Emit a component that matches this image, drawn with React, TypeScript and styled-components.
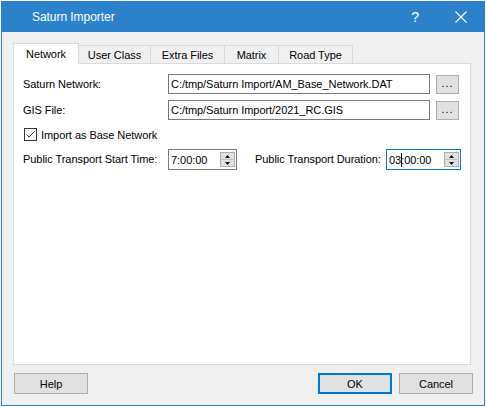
import { FC } from "react";
import styled, { createGlobalStyle } from "styled-components";

const GlobalStyle = createGlobalStyle`
	html, body {
		margin: 0;
		padding: 0;
		background: #ffffff;
	}
	body {
		font-family: "Liberation Sans", Arial, sans-serif;
		font-size: 11px;
		letter-spacing: -0.05px;
		color: #000000;
	}
`;

const StyledWindow = styled.div`
	box-sizing: border-box;
	margin: 1px 0 0 1px;
	width: 484px;
	height: 405px;
	border: 1px solid #2b82cb;
	display: flex;
	flex-direction: column;
	background: #f0f0f0;
`;

const StyledTitleBar = styled.div`
	height: 30px;
	flex: none;
	display: flex;
	align-items: center;
	background: #2b82cb;
	color: #ffffff;
	font-size: 12px;
	padding-left: 30px;
`;

const StyledTitle = styled.div`
	flex: 1;
	margin-top: -1px;
`;

const StyledCaptionButton = styled.div<{ $width: number }>`
	width: ${({ $width }) => $width}px;
	height: 30px;
	display: flex;
	align-items: center;
	justify-content: center;
	color: #ffffff;
	font-size: 14px;
`;

const StyledBody = styled.div`
	flex: 1;
	display: flex;
	flex-direction: column;
	padding: 11px 11px 11px 11px;
	min-height: 0;
`;

const StyledTabBar = styled.div`
	display: flex;
	align-items: flex-end;
	height: 20px;
	flex: none;
	position: relative;
	z-index: 1;
`;

const StyledTab = styled.div<{ $width: number; $active?: boolean }>`
	box-sizing: border-box;
	width: ${({ $width }) => $width}px;
	height: ${({ $active }) => ($active ? 21 : 18)}px;
	margin-bottom: ${({ $active }) => ($active ? -1 : 0)}px;
	margin-left: -1px;
	border: 1px solid #d9d9d9;
	border-bottom: none;
	background: ${({ $active }) => ($active ? "#ffffff" : "#f0f0f0")};
	display: flex;
	align-items: center;
	justify-content: center;
	padding-top: ${({ $active }) => ($active ? 0 : 1)}px;
	&:first-child {
		margin-left: 0;
	}
`;

const StyledPane = styled.div`
	box-sizing: border-box;
	flex: 1;
	margin-right: 2px;
	border: 1px solid #d9d9d9;
	background: #ffffff;
	padding: 10px 11px 0 9px;
	display: flex;
	flex-direction: column;
	gap: 6px;
`;

const StyledFileRow = styled.div`
	display: grid;
	grid-template-columns: 139px 1fr 23px;
	column-gap: 6px;
	align-items: center;
	height: 20px;
`;

const StyledLabel = styled.div<{ $width?: number }>`
	${({ $width }) => ($width ? `width: ${$width}px; flex: none;` : "")}
	white-space: nowrap;
	margin-top: -1px;
`;

const StyledInput = styled.div<{ $focused?: boolean }>`
	box-sizing: border-box;
	height: 20px;
	border: 1px solid ${({ $focused }) => ($focused ? "#0078d7" : "#7a7a7a")};
	background: #ffffff;
	padding-left: 2px;
	display: flex;
	align-items: center;
	white-space: nowrap;
	overflow: hidden;
`;

const StyledBrowseButton = styled.div`
	box-sizing: border-box;
	height: 19px;
	border: 1px solid #adadad;
	background: #e1e1e1;
	display: flex;
	align-items: center;
	justify-content: center;
	padding-bottom: 3px;
	letter-spacing: 1px;
`;

const StyledCheckRow = styled.div`
	display: flex;
	align-items: center;
	gap: 4px;
	height: 17px;
	padding-left: 1px;
`;

const StyledCheckBox = styled.div`
	box-sizing: border-box;
	width: 13px;
	height: 13px;
	border: 1px solid #333333;
	background: #ffffff;
	display: flex;
	align-items: center;
	justify-content: center;
`;

const StyledTimeRow = styled.div`
	display: flex;
	align-items: center;
	height: 21px;
`;

const StyledSpinBox = styled(StyledInput)<{ $width: number; $gap?: number }>`
	width: ${({ $width }) => $width}px;
	height: 21px;
	flex: none;
	justify-content: space-between;
	padding-right: 1px;
	margin-right: ${({ $gap }) => $gap ?? 0}px;
	overflow: visible;
`;

const StyledSpinText = styled.span`
	position: relative;
`;

const StyledCaret = styled.span`
	position: absolute;
	top: -1px;
	width: 1px;
	height: 14px;
	background: #000000;
`;

const StyledSpinButtons = styled.div`
	box-sizing: border-box;
	width: 15px;
	height: 15px;
	border: 1px solid #adadad;
	background: #e1e1e1;
	display: flex;
	flex-direction: column;
`;

const StyledSpinHalf = styled.div`
	flex: 1;
	display: flex;
	align-items: center;
	justify-content: center;
	& + & {
		border-top: 1px solid #c4c4c4;
	}
`;

const StyledButtonRow = styled.div`
	display: flex;
	align-items: center;
	margin-top: 8px;
	padding-left: 1px;
	gap: 7px;
`;

const StyledButton = styled.div<{ $default?: boolean }>`
	box-sizing: border-box;
	width: 74px;
	height: 21px;
	border: ${({ $default }) =>
		$default ? "2px solid #0078d7" : "1px solid #adadad"};
	background: #e1e1e1;
	display: flex;
	align-items: center;
	justify-content: center;
`;

const StyledSpacer = styled.div`
	flex: 1;
`;

const tabs = [
	{ label: "Network", width: 66, active: true },
	{ label: "User Class", width: 73 },
	{ label: "Extra Files", width: 75 },
	{ label: "Matrix", width: 55 },
	{ label: "Road Type", width: 75 },
];

const CloseGlyph: FC = () => (
	<svg width="12" height="12" viewBox="0 0 12 12">
		<path d="M0.5 0.5 L11.5 11.5 M11.5 0.5 L0.5 11.5" stroke="#ffffff" strokeWidth="1.1" />
	</svg>
);

const CheckGlyph: FC = () => (
	<svg width="11" height="11" viewBox="0 0 11 11">
		<path d="M1.5 5.5 L4 8 L9.5 2.5" fill="none" stroke="#333333" strokeWidth="1" />
	</svg>
);

const Arrow: FC<{ up?: boolean }> = ({ up }) => (
	<svg width="5" height="3" viewBox="0 0 5 3">
		<path d={up ? "M0 3 L2.5 0 L5 3 Z" : "M0 0 L5 0 L2.5 3 Z"} fill="#000000" />
	</svg>
);

const TimeSpin: FC<{ value: string; width: number; focused?: boolean; caretAt?: number; gap?: number }> = ({
	value,
	width,
	focused,
	caretAt,
	gap,
}) => (
	<StyledSpinBox $width={width} $focused={focused} $gap={gap}>
		<StyledSpinText>
			{value}
			{caretAt !== undefined && <StyledCaret style={{ left: caretAt }} />}
		</StyledSpinText>
		<StyledSpinButtons>
			<StyledSpinHalf>
				<Arrow up />
			</StyledSpinHalf>
			<StyledSpinHalf>
				<Arrow />
			</StyledSpinHalf>
		</StyledSpinButtons>
	</StyledSpinBox>
);

export default function App() {
	return (
		<>
			<GlobalStyle />
			<StyledWindow>
				<StyledTitleBar>
					<StyledTitle>Saturn Importer</StyledTitle>
					<StyledCaptionButton $width={46}>?</StyledCaptionButton>
					<StyledCaptionButton $width={46}>
						<CloseGlyph />
					</StyledCaptionButton>
				</StyledTitleBar>
				<StyledBody>
					<StyledTabBar>
						{tabs.map((tab) => (
							<StyledTab key={tab.label} $width={tab.width} $active={tab.active}>
								{tab.label}
							</StyledTab>
						))}
					</StyledTabBar>
					<StyledPane>
						<StyledFileRow>
							<StyledLabel>Saturn Network:</StyledLabel>
							<StyledInput>C:/tmp/Saturn Import/AM_Base_Network.DAT</StyledInput>
							<StyledBrowseButton>...</StyledBrowseButton>
						</StyledFileRow>
						<StyledFileRow>
							<StyledLabel>GIS File:</StyledLabel>
							<StyledInput>C:/tmp/Saturn Import/2021_RC.GIS</StyledInput>
							<StyledBrowseButton>...</StyledBrowseButton>
						</StyledFileRow>
						<StyledCheckRow>
							<StyledCheckBox>
								<CheckGlyph />
							</StyledCheckBox>
							<span>Import as Base Network</span>
						</StyledCheckRow>
						<StyledTimeRow>
							<StyledLabel $width={145}>Public Transport Start Time:</StyledLabel>
							<TimeSpin value="7:00:00" width={69} gap={18} />
							<StyledLabel $width={131}>Public Transport Duration:</StyledLabel>
							<TimeSpin value="03:00:00" width={75} focused caretAt={12} />
						</StyledTimeRow>
					</StyledPane>
					<StyledButtonRow>
						<StyledButton>Help</StyledButton>
						<StyledSpacer />
						<StyledButton $default>OK</StyledButton>
						<StyledButton>Cancel</StyledButton>
					</StyledButtonRow>
				</StyledBody>
			</StyledWindow>
		</>
	);
}
